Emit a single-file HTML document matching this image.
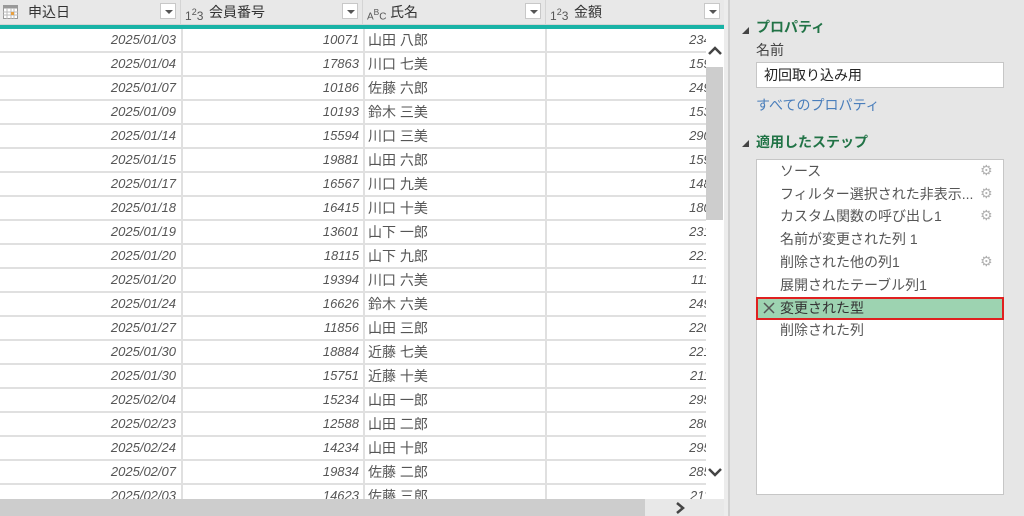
<!DOCTYPE html><html><head><meta charset="utf-8"><style>
*{box-sizing:border-box;margin:0;padding:0}
body{width:1024px;height:516px;overflow:hidden;background:#e6e6e6;font-family:"Liberation Sans","Noto Sans CJK JP",sans-serif;position:relative}
.grid{position:absolute;left:0;top:0;width:724px;height:516px;background:#fff;overflow:hidden}
.hdr{position:absolute;top:0;height:25px;background:#e8e8e8;border-right:1px solid #d4d4d4;border-bottom:1px solid #d4d4d4;font-size:14px;color:#333;line-height:24px}
.hdr .dd{position:absolute;right:4px;top:3px;width:16px;height:16px;background:#fff;border:1px solid #c8c8c8}
.hdr .dd:after{content:"";position:absolute;left:4px;top:6px;border-left:4px solid transparent;border-right:4px solid transparent;border-top:4px solid #555}
.teal{position:absolute;left:0;top:25px;width:724px;height:4px;background:#19b3a6}
.row{position:absolute;left:0;width:724px;height:24px;border-bottom:2px solid #e0e0e0;font-size:13px;color:#555;line-height:22px}
.row div{position:absolute;top:0;height:22px;overflow:hidden;white-space:nowrap}
.c1{left:0;width:180px;text-align:right;padding-right:4px;font-style:italic}
.c2{left:181px;width:181px;text-align:right;padding-right:3px;font-style:italic;border-left:2px solid #e0e0e0}
.c3{left:363px;width:183px;padding-left:3px;border-left:2px solid #e0e0e0;font-size:14px}
.c4{left:545px;width:161px;text-align:right;padding-right:0;font-style:italic;border-left:2px solid #e0e0e0}
.c4 span{position:relative;right:-12px}
.vs{position:absolute;left:706px;top:29px;width:18px;height:470px;background:#fff}
.thumb{position:absolute;left:706px;top:67px;width:17px;height:153px;background:#cdcdcd}
.hs{position:absolute;left:0;top:499px;width:724px;height:17px;background:#e8e8e8}
.hsth{position:absolute;left:0;top:499px;width:645px;height:17px;background:#cdcdcd}
.gap{position:absolute;left:724px;top:0;width:4px;height:516px;background:#ececec}
.sep{position:absolute;left:728px;top:0;width:2px;height:516px;background:#d0d0d0}
.tri{position:absolute;width:0;height:0;border-left:7px solid transparent;border-bottom:7px solid #444}
.ttl{position:absolute;left:756px;font-size:14px;font-weight:bold;color:#217346}
.lbl{position:absolute;font-size:14px;color:#444}
.inp{position:absolute;left:756px;top:62px;width:248px;height:26px;background:#fff;border:1px solid #c6c6c6;font-size:14px;color:#222;padding-left:7px;line-height:24px}
.steps{position:absolute;left:756px;top:159px;width:248px;height:336px;background:#fff;border:1px solid #c6c6c6}
.st{position:absolute;left:780px;font-size:14px;color:#555;line-height:20px}
.gear{position:absolute;left:980px;font-family:"DejaVu Sans",sans-serif;font-size:14px;color:#b0b0b0;line-height:20px}
.sel{position:absolute;left:756px;top:297px;width:248px;height:23px;background:#9dd3b1;border:2px solid #e02020}
</style></head><body>
<div class="grid">
<div class="hdr" style="left:0;width:181px"><svg style="position:absolute;left:3px;top:5px" width="15" height="14"><rect x="0.5" y="0.5" width="14" height="13" fill="#fff" stroke="#999"/><rect x="0.5" y="0.5" width="14" height="3" fill="#999"/><path d="M0 7H15M0 10H15M4 3V14M8 3V14M11 3V14" stroke="#bbb"/><rect x="8" y="7" width="3" height="3" fill="#e8a040"/></svg><span style="position:absolute;left:28px">申込日</span><div class="dd"></div></div>
<div class="hdr" style="left:181px;width:182px"><span style="position:absolute;left:4px;font-size:12px;color:#555">1<sup style="font-size:9px">2</sup>3</span><span style="position:absolute;left:28px">会員番号</span><div class="dd"></div></div>
<div class="hdr" style="left:363px;width:183px"><span style="position:absolute;left:4px;font-size:10px;color:#555">A<sup>B</sup>C</span><span style="position:absolute;left:27px">氏名</span><div class="dd"></div></div>
<div class="hdr" style="left:546px;width:178px;border-right:none"><span style="position:absolute;left:4px;font-size:12px;color:#555">1<sup style="font-size:9px">2</sup>3</span><span style="position:absolute;left:28px">金額</span><div class="dd"></div></div>
<div class="teal"></div>
<div class="row" style="top:29px"><div class="c1">2025/01/03</div><div class="c2">10071</div><div class="c3">山田 八郎</div><div class="c4"><span>2340</span></div></div>
<div class="row" style="top:53px"><div class="c1">2025/01/04</div><div class="c2">17863</div><div class="c3">川口 七美</div><div class="c4"><span>1590</span></div></div>
<div class="row" style="top:77px"><div class="c1">2025/01/07</div><div class="c2">10186</div><div class="c3">佐藤 六郎</div><div class="c4"><span>2490</span></div></div>
<div class="row" style="top:101px"><div class="c1">2025/01/09</div><div class="c2">10193</div><div class="c3">鈴木 三美</div><div class="c4"><span>1530</span></div></div>
<div class="row" style="top:125px"><div class="c1">2025/01/14</div><div class="c2">15594</div><div class="c3">川口 三美</div><div class="c4"><span>2900</span></div></div>
<div class="row" style="top:149px"><div class="c1">2025/01/15</div><div class="c2">19881</div><div class="c3">山田 六郎</div><div class="c4"><span>1590</span></div></div>
<div class="row" style="top:173px"><div class="c1">2025/01/17</div><div class="c2">16567</div><div class="c3">川口 九美</div><div class="c4"><span>1480</span></div></div>
<div class="row" style="top:197px"><div class="c1">2025/01/18</div><div class="c2">16415</div><div class="c3">川口 十美</div><div class="c4"><span>1800</span></div></div>
<div class="row" style="top:221px"><div class="c1">2025/01/19</div><div class="c2">13601</div><div class="c3">山下 一郎</div><div class="c4"><span>2310</span></div></div>
<div class="row" style="top:245px"><div class="c1">2025/01/20</div><div class="c2">18115</div><div class="c3">山下 九郎</div><div class="c4"><span>2210</span></div></div>
<div class="row" style="top:269px"><div class="c1">2025/01/20</div><div class="c2">19394</div><div class="c3">川口 六美</div><div class="c4"><span>1110</span></div></div>
<div class="row" style="top:293px"><div class="c1">2025/01/24</div><div class="c2">16626</div><div class="c3">鈴木 六美</div><div class="c4"><span>2490</span></div></div>
<div class="row" style="top:317px"><div class="c1">2025/01/27</div><div class="c2">11856</div><div class="c3">山田 三郎</div><div class="c4"><span>2200</span></div></div>
<div class="row" style="top:341px"><div class="c1">2025/01/30</div><div class="c2">18884</div><div class="c3">近藤 七美</div><div class="c4"><span>2210</span></div></div>
<div class="row" style="top:365px"><div class="c1">2025/01/30</div><div class="c2">15751</div><div class="c3">近藤 十美</div><div class="c4"><span>2110</span></div></div>
<div class="row" style="top:389px"><div class="c1">2025/02/04</div><div class="c2">15234</div><div class="c3">山田 一郎</div><div class="c4"><span>2950</span></div></div>
<div class="row" style="top:413px"><div class="c1">2025/02/23</div><div class="c2">12588</div><div class="c3">山田 二郎</div><div class="c4"><span>2800</span></div></div>
<div class="row" style="top:437px"><div class="c1">2025/02/24</div><div class="c2">14234</div><div class="c3">山田 十郎</div><div class="c4"><span>2950</span></div></div>
<div class="row" style="top:461px"><div class="c1">2025/02/07</div><div class="c2">19834</div><div class="c3">佐藤 二郎</div><div class="c4"><span>2850</span></div></div>
<div class="row" style="top:485px"><div class="c1">2025/02/03</div><div class="c2">14623</div><div class="c3">佐藤 三郎</div><div class="c4"><span>2110</span></div></div>
<div class="vs"></div><div class="thumb"></div>
<svg style="position:absolute;left:707px;top:45px" width="16" height="12"><path d="M2 9L8 3L14 9" stroke="#444" stroke-width="2.5" fill="none"/></svg>
<svg style="position:absolute;left:707px;top:466px" width="16" height="12"><path d="M2 3L8 9L14 3" stroke="#444" stroke-width="2.5" fill="none"/></svg>
<div class="hs"></div><div class="hsth"></div>
<svg style="position:absolute;left:674px;top:501px" width="12" height="14"><path d="M3 2L9 7L3 12" stroke="#444" stroke-width="2.5" fill="none"/></svg>
</div>
<div class="gap"></div><div class="sep"></div>
<div class="tri" style="left:742px;top:27px"></div>
<div class="ttl" style="top:17px">プロパティ</div>
<div class="lbl" style="left:756px;top:40px">名前</div>
<div class="inp">初回取り込み用</div>
<div class="lbl" style="left:756px;top:95px;color:#4a7ebb">すべてのプロパティ</div>
<div class="tri" style="left:742px;top:140px"></div>
<div class="ttl" style="top:132px">適用したステップ</div>
<div class="steps"></div>
<div class="st" style="top:161px">ソース</div><div class="gear" style="top:161px">⚙</div>
<div class="st" style="top:184px">フィルター選択された非表示...</div><div class="gear" style="top:184px">⚙</div>
<div class="st" style="top:206px">カスタム関数の呼び出し1</div><div class="gear" style="top:206px">⚙</div>
<div class="st" style="top:229px">名前が変更された列 1</div>
<div class="st" style="top:252px">削除された他の列1</div><div class="gear" style="top:252px">⚙</div>
<div class="st" style="top:275px">展開されたテーブル列1</div>
<div class="sel"></div>
<svg style="position:absolute;left:763px;top:302px" width="12" height="12"><path d="M1 1L11 11M11 1L1 11" stroke="#555" stroke-width="1.5"/></svg>
<div class="st" style="top:298px;color:#333">変更された型</div>
<div class="st" style="top:320px">削除された列</div>
</body></html>
